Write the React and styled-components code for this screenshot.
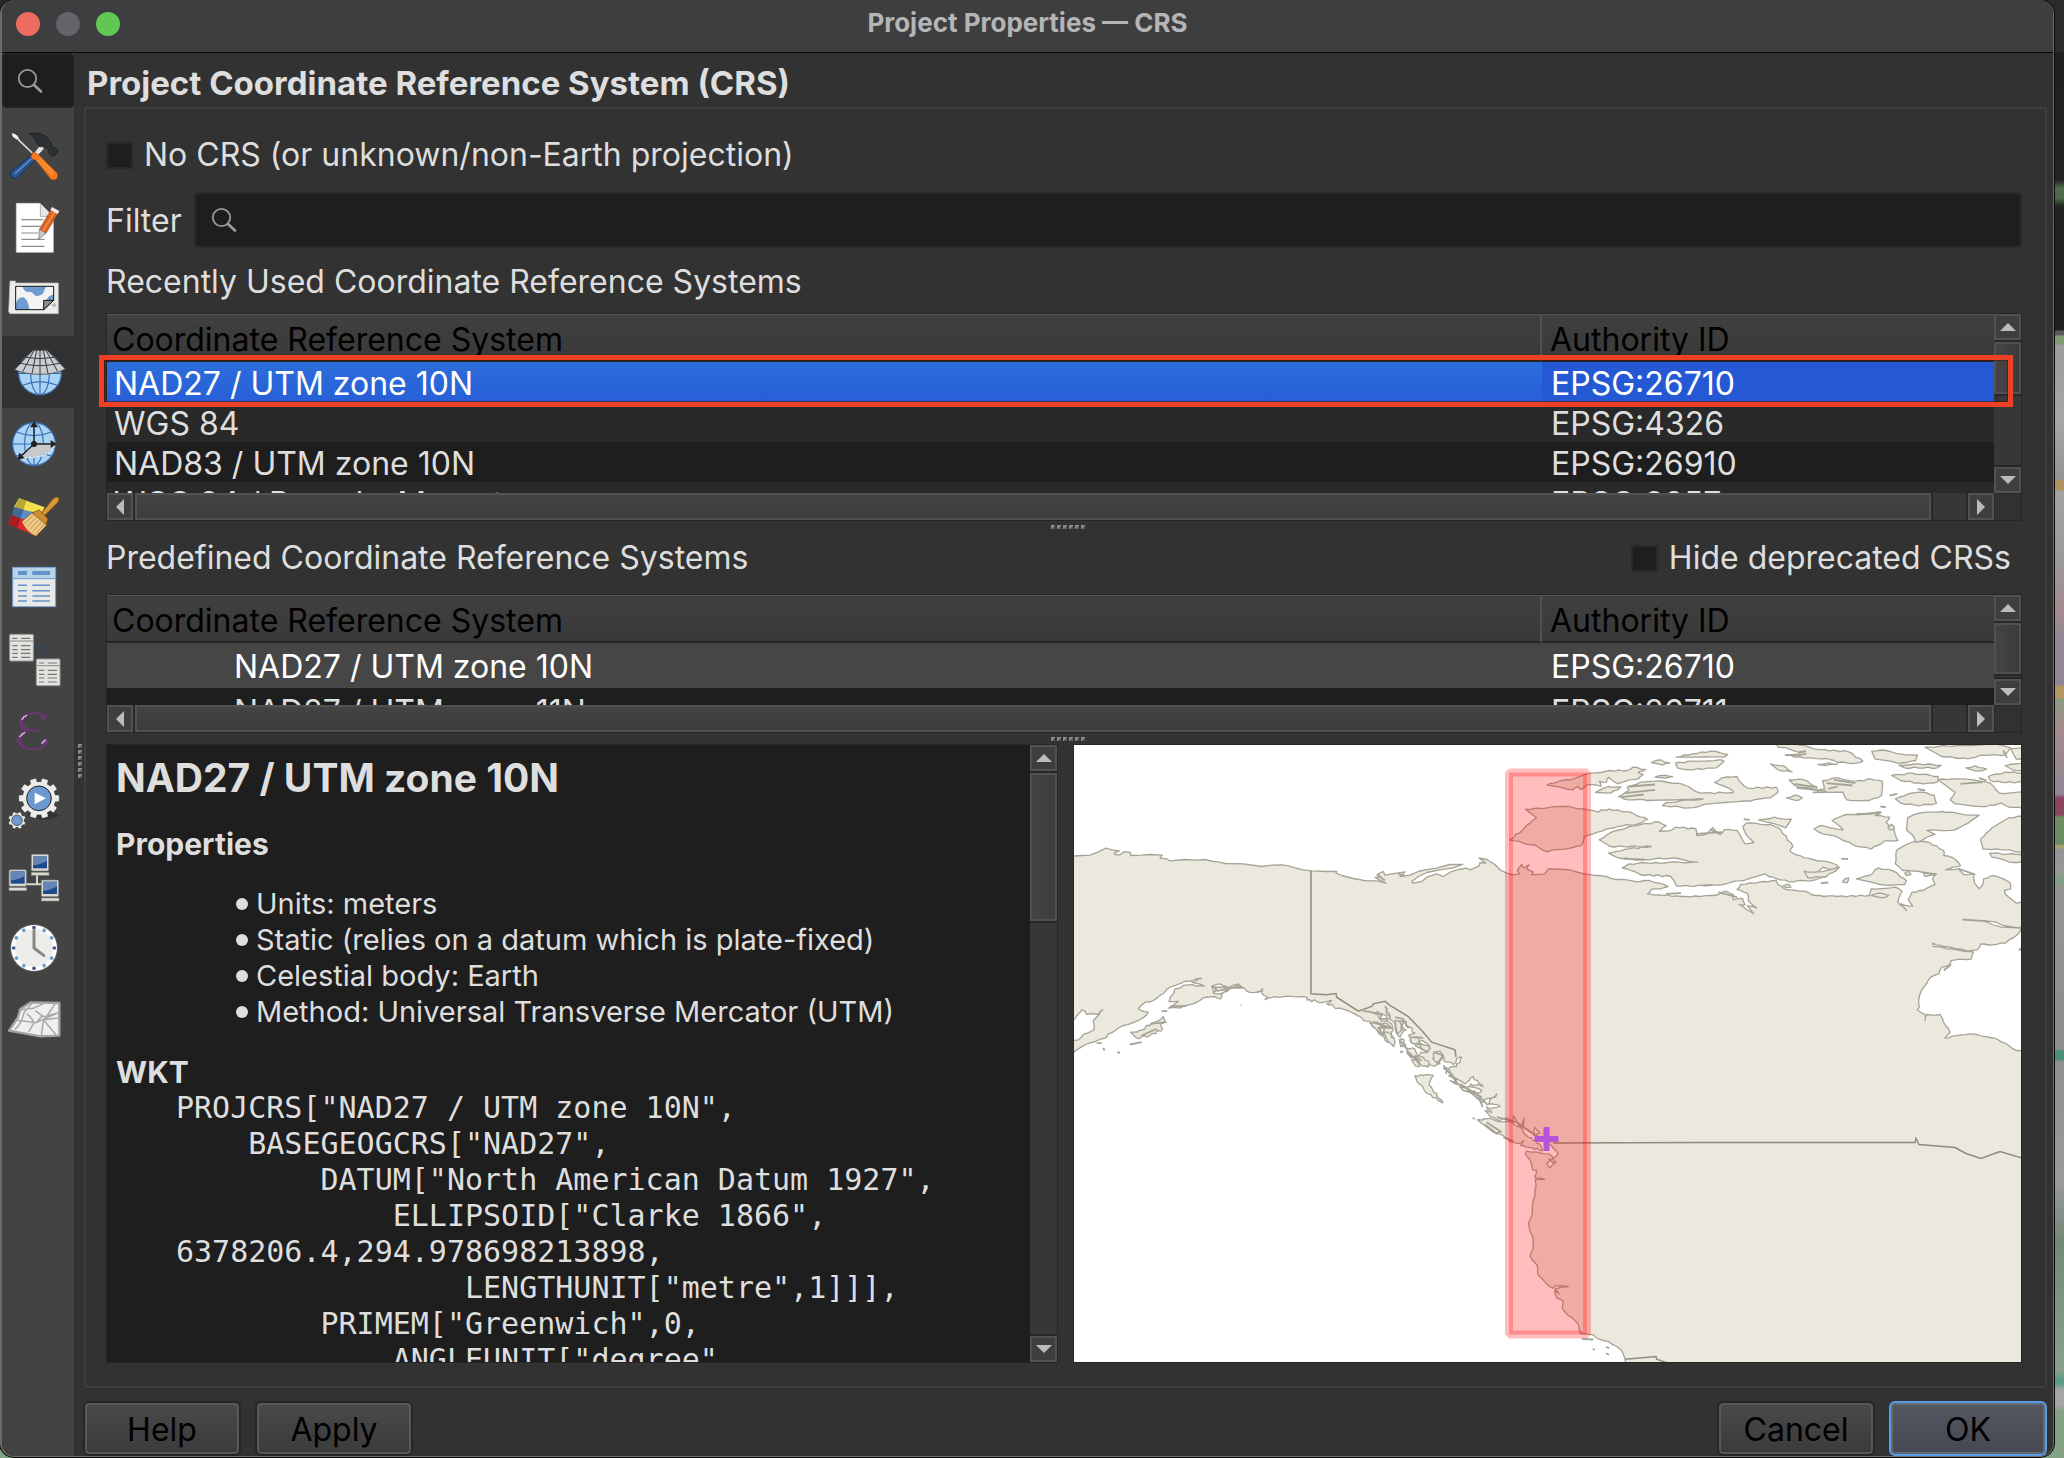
import React from "react";
import styled, { createGlobalStyle, css } from "styled-components";

const UI = `Inter, "Liberation Sans", sans-serif`;
const MONO = `"DejaVu Sans Mono", "Liberation Mono", monospace`;

const GlobalStyle = createGlobalStyle`
  *, *::before, *::after { box-sizing: border-box; }
  body { margin: 0; background: #1d1d1d; font-family: ${UI}; color: #dedede; }
  button, input { font: inherit; color: inherit; }
`;

/* ---------- window frame ---------- */

const Desktop = styled.div`
  display: flex;
  height: 100vh;
  min-height: 1100px;
  padding-right: 10px;
  padding-bottom: 1px;
  background: linear-gradient(
    #2a2a2a 0, #2a2a2a 52px, #1f1f1f 53px, #232323 180px, #4d6b4a 188px, #4d6b4a 198px, #222 206px,
    #1f1f1f 330px, #5a5a5a 331px, #5a5a5a 335px, #7f9c72 336px, #7f9c72 344px, #9c9c9c 345px, #a6a6a6 420px,
    #939393 480px, #b39261 481px, #b39261 490px, #a3a3a3 491px, #9a9a9a 560px, #a58a8d 610px, #8f8794 640px,
    #8f8794 685px, #b59560 686px, #b59560 697px, #8a9a80 700px, #a58a8d 730px, #8f8794 794px, #8c4560 798px,
    #8c4560 815px, #6c8d63 817px, #6c8d63 844px, #b0a666 846px, #939393 850px, #999 870px, #7fa183 880px,
    #949494 890px, #8d8d8d 1049px, #4a8f78 1051px, #4a8f78 1059px, #909090 1062px, #9a9a9a 1180px,
    #74887a 1240px, #8aa08a 1370px, #4f9a82 1382px, #a5a5a5 1390px, #a5a5a5 1405px, #84a384 1412px, #84a384 100%
  );
`;

const Window = styled.div`
  flex: 1;
  min-width: 0;
  display: flex;
  flex-direction: column;
  overflow: hidden;
  background: #323232;
  border: solid #6a6a6a;
  border-width: 0 1px 1px 2px;
  border-radius: 14px;
  box-shadow: 0 0 0 1px #080808;
`;

const TitleBar = styled.header`
  display: grid;
  grid-template-columns: 1fr auto 1fr;
  align-items: center;
  height: 53px;
  padding: 0 14px 4px;
  background: #3d3e40;
  border-bottom: 1px solid #050505;
`;

const Lights = styled.div`
  display: flex;
  gap: 16px;
`;

const Light = styled.button`
  width: 24px;
  height: 24px;
  padding: 0;
  border: 0;
  border-radius: 50%;
  background: ${(p) => p.$color};
`;

const WindowTitle = styled.h1`
  margin: 0;
  padding-bottom: 2px;
  font-size: 26px;
  line-height: 32px;
  font-weight: 700;
  color: #b5b5b6;
`;

const Body = styled.div`
  flex: 1;
  min-height: 0;
  display: flex;
`;

/* ---------- side bar ---------- */

const Sidebar = styled.nav`
  width: 72px;
  flex: none;
  background: #434343;
`;

const SideSearch = styled.label`
  display: flex;
  align-items: center;
  height: 55px;
  padding-left: 14px;
  margin-bottom: 12px;
  background: #1e1e1e;
  border: 1px solid #272727;
  border-radius: 4px;

  input {
    width: 20px;
    padding: 0;
    border: 0;
    outline: 0;
    background: none;
  }
`;

const SideItem = styled.button`
  display: block;
  width: 72px;
  height: 72px;
  padding: 0;
  border: 0;
  background: ${(p) => (p.$active ? "#323232" : "none")};

  svg { display: block; }
`;

/* ---------- main column ---------- */

const Main = styled.main`
  flex: 1;
  min-width: 0;
  display: flex;
  flex-direction: column;
  padding-right: 6px;
`;

const Grip = styled.div`
  flex: none;
  display: flex;
  flex-direction: ${(p) => (p.$vertical ? "column" : "row")};
  justify-content: center;
  align-items: center;
  gap: 2px;
  ${(p) => (p.$vertical ? "width: 9px; padding: 12px 0 0 2px;" : "height: 11px; padding-left: 8px;")}

  i {
    width: 4px;
    height: 4px;
    background: linear-gradient(135deg, #8b8b8b 60%, #5b5b5b 60%);
  }
`;

const PageTitle = styled.h2`
  margin: 0;
  padding-left: 4px;
  font-size: 33px;
  line-height: 60px;
  height: 54px;
  font-weight: 700;
  white-space: nowrap;
`;

const GroupBox = styled.section`
  flex: 1;
  min-height: 0;
  display: flex;
  flex-direction: column;
  margin-left: 1px;
  padding: 20px 23px 23px 20px;
  border: 2px solid #3f3f3f;
  border-radius: 3px;
`;

const CheckLabel = styled.label`
  display: flex;
  align-items: center;
  gap: 11px;
  padding-right: ${(p) => p.$inset || 0}px;
  height: 52px;
  font-size: 32px;
  line-height: 40px;
  white-space: nowrap;

  input {
    appearance: none;
    width: 27px;
    height: 27px;
    margin: 0;
    background: #1e1e1e;
    border: 2px solid #292929;
  }
`;

const FilterRow = styled.div`
  display: flex;
  align-items: center;
  gap: 12px;
  margin-top: 11px;
  font-size: 32px;
  line-height: 40px;

  label { padding-top: 2px; }
`;

const SearchField = styled.div`
  flex: 1;
  display: flex;
  align-items: center;
  gap: 10px;
  height: 56px;
  padding-left: 15px;
  background: #1e1e1e;
  border: 2px solid #292929;
  border-radius: 5px;

  input {
    flex: 1;
    min-width: 0;
    border: 0;
    outline: 0;
    background: none;
  }
`;

const SectionRow = styled.div`
  display: flex;
  align-items: center;
  justify-content: space-between;
  height: ${(p) => p.$height}px;
  margin-bottom: ${(p) => p.$after || 0}px;
  padding-top: 2px;
  font-size: 32px;
  line-height: 40px;
  white-space: nowrap;
`;

/* ---------- tables and scroll bars ---------- */

const ScrollFrame = styled.div`
  position: relative;
  flex: none;
  display: grid;
  grid-template: minmax(0, 1fr) 27px / minmax(0, 1fr) 27px;
  height: ${(p) => p.$height}px;
  border: 1px solid #262626;
`;

const Viewport = styled.div`
  overflow: hidden;
  background: #1e1e1e;
`;

const Corner = styled.div`
  background: #313131;
  border: solid #292929;
  border-width: 1px 0 0 1px;
`;

const Bar = styled.div`
  display: flex;
  flex-direction: ${(p) => (p.$vertical ? "column" : "row")};
  gap: 2px;
  min-height: 0;
  background: #282828;
`;

const BarButton = styled.button`
  flex: none;
  display: grid;
  place-items: center;
  width: ${(p) => (p.$vertical ? 27 : 26)}px;
  height: ${(p) => (p.$vertical ? 26 : 27)}px;
  padding: 0;
  border: 2px solid #515151;
  background: #3e3e3e;
`;

const Thumb = styled.div`
  flex: ${(p) => p.$flex};
  border: 2px solid #515151;
  background: ${(p) =>
    p.$vertical ? "linear-gradient(90deg, #444, #3c3c3c)" : "linear-gradient(#444, #3c3c3c)"};
`;

const Track = styled.div`
  flex: 1;
  background: #373737;
`;

const Arrow = styled.span`
  border: solid transparent;
  ${(p) =>
    ({
      up: css`border-width: 0 8px 8px; border-bottom-color: #bcbcbc;`,
      down: css`border-width: 8px 8px 0; border-top-color: #bcbcbc;`,
      left: css`border-width: 8px 8px 8px 0; border-right-color: #bcbcbc;`,
      right: css`border-width: 8px 0 8px 8px; border-left-color: #bcbcbc;`,
    })[p.$dir]}
`;

const Table = styled.table`
  width: 100%;
  table-layout: fixed;
  border-collapse: separate;
  border-spacing: 0;
  font-size: 32px;
  white-space: nowrap;

  th {
    height: 48px;
    padding: 4px 0 0 5px;
    text-align: left;
    font-weight: 400;
    line-height: 41px;
    color: #000;
    background: linear-gradient(#404040, #393939);
    border-top: 1px solid #565656;
    border-bottom: 2px solid #262626;
  }
  th:first-child { border-right: 2px solid #515151; }
  th:last-child { width: 452px; padding-left: 8px; }

  td {
    height: ${(p) => p.$row}px;
    padding: 3px 0 0 9px;
    line-height: ${(p) => p.$row - 3}px;
  }
  td:first-child { padding-left: ${(p) => p.$indent}px; }
`;

const ROW = {
  dark: css`background: #1e1e1e;`,
  light: css`background: #292929;`,
  current: css`background: #464646; color: #fff;`,
  selected: css`
    color: #fff;
    background: #2459d3;
    td:first-child { background: linear-gradient(#2d6ddb, #275fd7); }
  `,
};

const Row = styled.tr`
  ${(p) => ROW[p.$tone]}
`;

const Highlight = styled.div`
  position: absolute;
  left: -8px;
  right: 8px;
  top: 41px;
  height: 52px;
  border: 5px solid #ee4024;
  outline: 1px solid rgba(70, 20, 10, 0.6);
  outline-offset: -6px;
  pointer-events: none;
`;

/* ---------- details ---------- */

const Panes = styled.div`
  flex: 1;
  min-height: 0;
  display: grid;
  grid-template-columns: minmax(0, 952fr) minmax(0, 949fr);
  gap: 15px;
`;

const InfoPane = styled.div`
  display: grid;
  grid-template-columns: minmax(0, 1fr) 27px;
  min-height: 0;
  border: 1px solid #262626;
  background: #1e1e1e;
`;

const InfoText = styled.article`
  min-height: 0;
  overflow: hidden;
  padding: 6px 0 0 9px;
  font-size: 29px;
  line-height: 36px;

  h3 { margin: 0 0 21px; font-size: 39px; line-height: 54px; font-weight: 700; }
  h4 { margin: 0; font-size: 30px; line-height: 36px; font-weight: 700; }
  ul { margin: 24px 0; padding: 0 0 0 120px; list-style: none; }
  li { display: flex; align-items: center; gap: 8px; white-space: nowrap; }
  li::before { content: ""; width: 12px; height: 12px; border-radius: 50%; background: currentColor; }
  pre { margin: 0 0 0 60px; font-family: ${MONO}; font-size: 30px; line-height: 36px; }
`;

const MapFrame = styled.div`
  min-height: 0;
  border: 1px solid #262626;
  background: #fff;

  svg { display: block; width: 100%; height: 100%; }
`;

const Footer = styled.footer`
  flex: none;
  display: flex;
  gap: 14px;
  height: 68px;
  padding-top: 13px;
`;

const Spacer = styled.div`
  flex: 1;
`;

const PushButton = styled.button`
  width: 158px;
  height: 55px;
  padding: 2px 0 0;
  border: 2px solid ${(p) => (p.$primary ? "#589be6" : "#262626")};
  border-radius: 6px;
  background: ${(p) =>
    p.$primary ? "linear-gradient(#535861, #444850)" : "linear-gradient(#494949, #3b3b3b)"};
  box-shadow: inset 0 0 0 2px ${(p) => (p.$primary ? "#646a74" : "#585858")};
  font-size: 32px;
  line-height: 40px;
  color: #000;
`;

/* ---------- drawings ---------- */

const Magnifier = () => (
  <svg width="26" height="26" viewBox="0 0 26 26" fill="none" stroke="#9a9a9a" aria-hidden="true">
    <circle cx="10.5" cy="10.5" r="8.7" strokeWidth="1.8" />
    <path d="M17 17l7 6.500" strokeWidth="2.800" strokeLinecap="round" />
  </svg>
);

const Tools = () => (
  <>
    <path d="M37 403l14 6 6 12 40 38" fill="none" stroke="#e2e2e2" strokeWidth="5" />
    <path d="M35 400l10 2 10 12-4 5-12-8z" fill="#f2f2f2" />
    <path d="M98 463l12 13-56 56q-8 8-18 0-10-9-2-18z" fill="#2a5590" stroke="#152f56" strokeWidth="3" />
    <path d="M94 476l-50 46" stroke="#6b94c8" strokeWidth="4" />
    <path d="M122 434l10 12-20 22-9-10z" fill="#dfe3e0" stroke="#555" strokeWidth="1.500" />
    <path d="M88 402q30-8 50 8 18 14 18 32l12 3q8 6 4 14l-12 10-12-8-2-12-16-12-10 4-8-8q-4-22-24-31z" fill="#2b3032" stroke="#14181a" strokeWidth="2" />
    <path d="M92 470l8-14 16 8 56 56q4 12-4 18-8 4-16-1l-44-56-10-3z" fill="#f4791f" stroke="#a94a0c" strokeWidth="2" />
    <path d="M112 480l46 46M122 478l40 42" stroke="#ffae5c" strokeWidth="3" />
  </>
);

const Page = () => (
  <>
    <path d="M49 610h72l39 40v107H49z" fill="#fff" stroke="#d5d5d5" strokeWidth="2" />
    <path d="M121 610v39h39z" fill="#e6e6e6" stroke="#666" strokeWidth="1.500" />
    <path d="M64 659h66M64 679h58M64 699h50M64 718h70M64 739h70" stroke="#8f8f8f" strokeWidth="3.500" />
    <path d="M154 628l20 12-36 60-20-12z" fill="#dc6423" stroke="#8f3a0c" strokeWidth="1.500" />
    <path d="M164 636l-36 58" stroke="#f59b4e" strokeWidth="4" />
    <path d="M156 621l22 12-5 9-22-12z" fill="#f1ece8" />
    <path d="M118 688l20 12-22 17z" fill="#c9c9c9" stroke="#666" strokeWidth="2" />
  </>
);

const Layout = () => (
  <>
    <path d="M30 843h16v6h129v92H30l-4-6z" fill="#ececea" stroke="#bdbdbd" strokeWidth="2" />
    <path d="M47 859h114v42l-30 28H47z" fill="#f3f3f3" />
    <path d="M68 860h70q-6 10-8 20-12 12-26 6-8-14-22-10-12-4-14-16zM48 928v-18q6-20 22-18 14 6 18 36zM140 900q4-14 20-16v18z" fill="#6d9bd2" />
    <path d="M47 859h114v42l-30 28H47z" fill="none" stroke="#111" strokeWidth="3" />
    <path d="M131 901h30l-30 28z" fill="#8d8d8d" stroke="#111" strokeWidth="3" />
    <path d="M152 916l12-8 6 6-6 8z" fill="#bbb" />
  </>
);

const Globe = ({ cx, cy }) => (
  <g fill="none" stroke="#3b6fb8" strokeWidth="3.500">
    <circle cx={cx} cy={cy} r="64" fill="#a9d4f3" />
    <ellipse cx={cx} cy={cy} rx="28" ry="64" />
    <path d={`M${cx} ${cy - 64}v128M${cx - 64} ${cy}h128M${cx - 52} ${cy - 36}q52 22 104 0M${cx - 52} ${cy + 36}q52-22 104 0`} />
  </g>
);

const Projection = () => (
  <>
    <Globe cx={120} cy={160} />
    <path d="M99 91h42l55 56q-30 16-76 16t-76-14z" fill="#c9ced2" stroke="#4a4a4a" strokeWidth="2.500" />
    <path d="M78 112q42 8 84 0M62 130q58 14 116 0M110 91l-14 70M130 91l14 70M120 91v72M102 91l-34 64M138 91l34 62" fill="none" stroke="#3a3a3a" strokeWidth="3" />
  </>
);

const Transform = () => (
  <>
    <Globe cx={102} cy={372} />
    <path d="M102 372h62q-14 42-92 40l-10 0z" fill="#c7c9cc" />
    <path d="M62 412q88 6 102-36" fill="none" stroke="#fff" strokeWidth="3" strokeDasharray="7 5" />
    <path d="M102 372v-54M102 372h52M102 372l-36 34" stroke="#222" strokeWidth="4" />
    <path d="M102 304l-12 18h24zM170 372l-18-12v24zM52 420l6-22 16 16z" fill="#222" />
    <circle cx="102" cy="372" r="9" fill="#222" />
  </>
);

const Brush = () => (
  <>
    <path d="M57 534l77 28-14 26q-40-4-78-26z" fill="#f4e04a" />
    <path d="M44 560q40 16 76 18l-14 30q-38-6-70-24z" fill="#5b8bc8" />
    <path d="M34 586q30 12 66 20l12 44-88-38z" fill="#e3262b" />
    <path d="M57 534l22 8-26 82-29-12z" fill="#000" opacity=".25" />
    <path d="M124 580l34-42q10-10 18-6 4 8-4 17l-40 40z" fill="#d99838" stroke="#7d4c10" strokeWidth="2.500" />
    <path d="M98 578l20-8 26 26-6 18-14 2z" fill="#d08d34" stroke="#7d4c10" strokeWidth="2.500" />
    <path d="M96 578l44 38-32 33q-28-12-43-44z" fill="#edc987" stroke="#7d4c10" strokeWidth="2" />
    <path d="M100 586l-26 24M108 593l-26 26M116 600l-26 28M124 607l-26 29M132 613l-26 30" stroke="#a9752c" strokeWidth="2" />
  </>
);

const Attributes = () => (
  <>
    <path d="M38 742h129v118H38z" fill="#e9e9e7" stroke="#6e9bd0" strokeWidth="3" />
    <path d="M40 744h125v32H40z" fill="#b5d4e9" />
    <path d="M38 776h129" stroke="#6e9bd0" strokeWidth="3" />
    <path d="M54 759h27M97 759h53" stroke="#6592c8" strokeWidth="12" />
    <path d="M54 796h27M54 812h27M54 828h27M54 843h27M97 796h53M97 812h53M97 828h53M97 843h53" stroke="#6592c8" strokeWidth="4.500" />
  </>
);

const Sheet = ({ x, y }) => (
  <g transform={`translate(${x} ${y})`}>
    <rect width="71" height="80" rx="3" fill="#e3e3df" stroke="#9a9a96" strokeWidth="3" />
    <path d="M1 20h69" stroke="#888" strokeWidth="3" />
    <path d="M8 12h16M34 12h28M8 34h16M34 34h28M8 46h16M34 46h28M8 57h16M34 57h28M8 69h16M34 69h28" stroke="#777" strokeWidth="3.500" />
  </g>
);

const Relations = () => (
  <>
    <path d="M100 978h26v40" fill="none" stroke="#2c4462" strokeWidth="4" />
    <Sheet x={29} y={943} />
    <Sheet x={109} y={1017} />
  </>
);

const Variables = () => (
  <>
    <path d="M136 84q-8-14-32-14-32 0-38 22 0 20 24 28-30 6-32 30 2 26 42 28 34 0 42-26M92 121q14 3 28 0" fill="none" stroke="#693872" strokeWidth="6" strokeLinecap="round" />
    <path d="M72 76q-16 20 0 42-22-22 0-42zM66 128q-18 22 4 44-30-18-4-44z" fill="#693872" stroke="#693872" strokeWidth="7" strokeLinejoin="round" />
    <path d="M122 72q20-2 16 16-8 8-16 0zM122 168q-2-16 14-22 12 4 6 16z" fill="#693872" />
    <path d="M66 88q4-8 14-12M60 140q4-6 14-12M126 160l10-10" fill="none" stroke="#d9bfdf" strokeWidth="4" strokeLinecap="round" />
  </>
);

const Cog = ({ cx, cy, r, teeth, width }) => (
  <g fill="#ececea" stroke="#1d1d1d" strokeWidth="1">
    {Array.from({ length: teeth }, (_, i) => (
      <rect key={i} x={cx - width / 2} y={cy - r * 1.24} width={width} height={r} rx={width / 6} transform={`rotate(${(360 / teeth) * (i + 0.5)} ${cx} ${cy})`} />
    ))}
    <circle cx={cx} cy={cy} r={r} stroke="none" />
  </g>
);

const Processing = () => (
  <>
    <ellipse cx="130" cy="376" rx="46" ry="12" fill="#333" />
    <Cog cx={117} cy={325} r={49} teeth={10} width={20} />
    <circle cx="117" cy="325" r="37" fill="#6c9ad0" stroke="#222" strokeWidth="3" />
    <path d="M104 308l34 17-34 18z" fill="#fff" />
    <Cog cx={51} cy={391} r={21} teeth={8} width={10} />
    <circle cx="51" cy="391" r="16" fill="#6c9ad0" stroke="#333" strokeWidth="2" />
  </>
);

const Computer = ({ x, y }) => (
  <g transform={`translate(${x} ${y})`}>
    <rect width="52" height="50" rx="4" fill="#dcdcd4" stroke="#777" strokeWidth="2" />
    <rect x="5" y="5" width="42" height="37" fill="#1d4a8c" />
    <path d="M5 5h42v14q-14 10-42 14z" fill="#6684b4" />
    <rect x="0" y="54" width="53" height="9" fill="#d9dbd0" stroke="#888" strokeWidth="1.500" />
  </g>
);

const Server = () => (
  <>
    <path d="M111 552v32M78 583h48" stroke="#d5d5d5" strokeWidth="6" />
    <Computer x={94} y={493} />
    <Computer x={27} y={539} />
    <Computer x={124} y={570} />
  </>
);

const Clock = () => (
  <>
    <circle cx="102" cy="774" r="72" fill="#5c5c5a" />
    <circle cx="102" cy="774" r="69" fill="#fff" />
    <circle cx="102" cy="774" r="58" fill="#ededeb" />
    {Array.from({ length: 12 }, (_, i) => (
      <circle key={i} cx="102" cy="713" r="5.500" fill={i % 3 ? "#6c9ad0" : "#3b5a86"} transform={`rotate(${i * 30} 102 774)`} />
    ))}
    <path d="M102 722v52l30 23" fill="none" stroke="#878783" strokeWidth="9" strokeLinejoin="round" strokeLinecap="round" />
  </>
);

const Terrain = () => (
  <g strokeLinejoin="round" fill="none">
    <path d="M92 937l86 2v98l-58 2-93-17 26-38 8-27z" fill="#efefed" stroke="#a2a2a2" strokeWidth="7" />
    <path d="M56 960l44-5 32-15M46 990l62 8 68-30M44 1018q20-14 28-50l24-28M86 1026l16-28q-10-20-22-26M124 1036l6-42 36-54M106 962l24 18 46-12M108 998l18-20M134 994l34 40M128 990l46-6" stroke="#a8a8a8" strokeWidth="4.500" />
  </g>
);

const SIDE_ITEMS = [
  ["General", Tools, 360],
  ["Metadata", Page, 576],
  ["View Settings", Layout, 792],
  ["CRS", Projection, 48],
  ["Transformations", Transform, 264],
  ["Default Styles", Brush, 480],
  ["Data Sources", Attributes, 696],
  ["Relations", Relations, 912],
  ["Variables", Variables, 18],
  ["Macros", Processing, 234],
  ["Server", Server, 450],
  ["Temporal", Clock, 666],
  ["Terrain", Terrain, 882],
];

/* The map outline is digitised on three sheets, each with its own origin and scale. */
const sheet = (ox, oy, sx, sy) => (points) =>
  points
    .trim()
    .split(/\s+/)
    .map((pair) => {
      const [x, y] = pair.split(",").map(Number);
      return `${(ox + x * sx).toFixed(1)},${(oy + y * sy).toFixed(1)}`;
    })
    .join(" ");

const west = sheet(1070, 740, 1 / 3, 1 / 3);
const east = sheet(1480, 740, 584 / 1568, 1 / 3);
const coast = sheet(1300, 940, 1 / 3, 1 / 3);

/* Adds small bays and points to a shore line, the same ones on every render. */
const rugged = (text, depth, step = 5) => {
  const points = text.split(" ").map((pair) => pair.split(",").map(Number));
  const out = [];
  points.forEach(([x, y], i) => {
    out.push(`${x},${y}`);
    const next = points[i + 1];
    if (!next) return;
    const length = Math.hypot(next[0] - x, next[1] - y);
    const count = Math.floor(length / step);
    for (let k = 1; k <= count; k += 1) {
      const t = k / (count + 1);
      const px = x + (next[0] - x) * t;
      const py = y + (next[1] - y) * t;
      const shift = Math.sin(px * 12.9 + py * 78.2) * depth;
      out.push(`${(px - ((next[1] - y) / length) * shift).toFixed(1)},${(py + ((next[0] - x) / length) * shift).toFixed(1)}`);
    }
  });
  return out.join(" ");
};

const MAINLAND = [
  west(`0,347 60,344 85,334 108,323 125,328 148,331 132,338 135,342 150,343 162,334 180,335 183,345 215,344 240,342
    277,344 270,353 290,355 300,361 345,357 380,359 405,357 430,363 445,364 465,369 520,370 575,378 605,374 635,373 655,376 675,382
    700,388 723,391 770,393 800,393 798,398 815,405 850,414 890,421 920,421 948,428 928,418 915,411 930,410 925,400 940,393 945,404
    985,397 1005,394 990,408 1020,404 1045,393 1065,388 1100,383 1140,372 1178,372 1150,382 1110,388 1070,396 1045,408
    1025,424 1030,428 1055,423 1070,410 1100,400 1120,408 1140,395 1165,387 1192,383 1200,388 1228,376 1230,366 1248,368 1226,352 1250,357
    1275,372 1290,388 1310,398 1330,403 1350,400 1342,390 1355,372 1362,382 1377,373 1370,385 1390,395 1385,403 1425,400 1435,385 1485,387`),
  rugged(east(`242,388 280,400 330,406 370,417 430,423 455,420 480,428 505,438 485,445 460,446 450,460 480,463 540,468 590,468 640,462
    660,452 680,462 680,478 705,474 712,492 695,492 735,520 718,496 743,502 720,480 718,458 690,447 700,432 750,425 795,420 800,432
    825,448 870,452 900,465 960,468 1045,465 1050,445 1115,440 1133,452 1122,485 1145,510 1130,490 1162,497 1150,478 1160,455 1190,450
    1222,432 1215,415 1225,400 1195,408 1190,396 1160,392 1135,390 1115,370 1118,330 1145,312 1165,303 1205,305 1245,330 1245,345 1270,352
    1290,375 1250,388 1285,385 1300,403 1325,400 1328,428 1340,445 1350,432 1352,415 1380,405 1422,425 1425,445 1408,450 1410,460 1440,488 1470,480
    1470,560 1452,568 1440,585 1410,608 1375,613 1345,610 1335,628 1310,632 1270,622 1245,618 1215,608 1218,618 1255,625 1325,634
    1320,655 1265,660 1262,672 1240,680 1232,700 1210,710 1200,728 1185,750 1178,778 1180,800 1174,808 1195,822 1195,840 1200,822 1235,822
    1250,855 1262,875 1248,893 1268,887 1315,880 1350,888 1390,897 1420,915 1440,930 1470,936 1470,1900`), 0.6),
  rugged(coast(`976,1290 976,1258 965,1230 950,1218 925,1203 895,1195 880,1183 842,1180 836,1155 825,1140 805,1125 787,1103 790,1082 770,1072
    764,1050 778,1060 766,1045 805,1038 765,1036 760,1043 745,1035 715,1005 712,975 690,948 700,925 700,900 690,870 686,845 697,820
    701,775 708,740 706,717 735,717 704,710 710,690 698,688 690,658 676,640 680,632 745,640 760,652 740,668 750,682 768,665 757,655
    775,640 752,612 735,608 725,592 700,584 720,578 705,560 702,580 670,560 672,533 665,560 650,545 640,525 640,545 620,532 600,540 570,528 555,510`), 0.5),
  rugged(coast(`575,516 560,500 600,497 560,493 590,460 550,485 530,465 545,450 500,440 512,430 550,437 525,418 520,408 495,430 460,408 445,385 470,378 485,350
    470,355 460,372 440,365 415,335 398,355 420,370 380,378 350,345 385,330 330,300 390,325 375,305 340,300 325,285 345,278 310,240 325,262 300,240
    318,268 300,290 275,240 255,198 270,235 230,213 240,235 275,250 280,318 245,285 215,250 185,232 150,213 115,203 80,190 95,180 50,183 20,178`), 1.4, 3),
  rugged(west(`712,778 710,770 655,767 600,772 585,778 592,768 575,758 578,745 560,755 530,752 505,730 480,740 450,730 425,738 430,758 455,760
    452,775 435,768 400,772 370,790 330,803 295,803 325,783 297,783 315,745 355,733 403,737 365,725 395,714 345,722 300,740
    270,765 250,780 225,785 205,805 235,815 230,823 200,842 160,855 115,880 105,893 60,907 12,935 0,940 0,898 25,898 42,880 72,868
    70,840 85,825 98,808 85,822 50,822 45,812 35,808 25,820 15,835 0,835`), 0.8),
].join(" ");

const ARCTIC = [
  "180,134 210,123 250,115 300,98 350,90 395,90 410,80 445,87 425,95 438,102 425,115 400,118 370,130 345,110 340,125 320,122 325,138 290,132 272,148 262,138 250,148 215,140",
  "122,206 180,202 240,198 290,208 318,215 325,208 370,208 410,218 450,237 425,250 370,258 315,275 280,290 272,315 180,334 150,315 115,307 80,298 115,268 125,255 152,232",
  "320,298 360,272 410,256 480,244 500,255 482,273 505,272 525,260 580,265 582,285 610,280 625,262 645,282 655,268 690,270 712,310 735,306 720,290 706,258 715,248 780,252 808,268 840,318 832,332 870,352 925,362 960,375 955,392 920,380 900,398 930,408 900,418 830,424 775,408 765,400 720,415 660,430 600,435 528,437 512,408 430,402 382,382 400,370 470,366 560,366 585,365 520,352 430,358 380,354 345,338 400,325 460,318 350,318",
  "450,180 385,175 372,168 400,150 395,140 430,125 470,122 530,128 560,138 592,158 680,156 678,150 630,126 650,112 690,108 708,135 720,143 795,140 800,155 780,172 725,182 620,190 560,202 490,195 500,186 600,175 500,178",
  "527,50 570,40 620,32 665,42 655,50 590,50",
  "525,68 570,62 640,58 655,62 635,82 560,88 530,82",
  "460,66 485,58 510,68 490,73",
  "310,156 345,138 378,140 350,158",
  "470,110 490,105 517,108 500,113",
  "795,8 860,14 900,26 990,34 1028,62 1010,68 960,66 930,54 870,52 820,44 875,40 830,25 800,20",
  "780,70 815,76 838,95 800,88",
  "908,72 935,67 960,71 930,75",
  "1052,32 1090,30 1130,40 1175,44 1170,60 1120,68 1060,55",
  "1125,74 1180,70 1238,74 1228,82 1140,82",
  "1195,20 1280,15 1380,10 1425,22 1405,45 1350,44 1310,55 1240,48",
  "1425,25 1455,22 1470,56 1440,56",
  "1305,82 1330,76 1360,86 1330,91",
  "1410,76 1470,66 1470,90 1430,88",
  "1105,105 1160,98 1230,108 1228,125 1190,130 1130,120",
  "1365,108 1410,95 1470,98 1470,126 1400,125 1370,120",
  "1230,118 1280,115 1345,122 1370,128 1395,158 1470,156 1470,202 1420,200 1400,188 1360,198 1275,190 1262,178 1275,155",
  "830,118 870,118 905,140 900,148 845,135",
  "895,156 925,145 920,120 960,112 1010,122 1050,116 1080,122 1078,165 1045,180 985,178 975,155",
  "823,172 845,164 866,172 848,180",
  "1115,175 1150,160 1185,155 1220,165 1226,188 1180,196 1130,188",
  "897,265 920,255 975,268 945,240 985,222 1040,220 1075,215 1060,225 1100,230 1090,245 1112,270 1122,300 1085,302 1050,326 1000,312 960,290 910,275",
  "1148,232 1180,218 1240,213 1290,220 1340,224 1310,248 1275,268 1200,270 1222,282 1170,305 1160,282 1145,268",
  "748,238 790,230 836,236 820,262 770,245",
  "1470,226 1420,232 1375,262 1345,295 1350,325 1410,328 1470,338",
  "1368,338 1450,342 1470,366 1420,364 1375,350",
  "1010,415 1045,405 1070,382 1110,392 1145,420 1140,432 1100,435 1050,425",
  "1050,465 1070,458 1098,464 1080,472",
  "870,392 900,395 940,388 965,380 930,408 880,412",
  "815,435 830,432 835,440 820,441",
  "980,415 990,412 985,427 973,424",
  "1140,398 1150,392 1157,402 1145,405",
  "1095,260 1105,252 1113,265 1100,268",
];

const PACIFIC = [
  "345,405 370,405 400,405 388,435 428,487 385,460 352,425",
  "532,538 560,535 640,548 660,560 680,585 718,610 728,630 662,615 672,600 660,608 635,605 605,583 580,575",
  "210,248 232,245 252,262 250,280 232,270",
  "240,248 262,250 272,262 250,258",
  "252,275 268,278 284,300 282,318 262,300",
  "285,240 300,245 304,270 292,282",
  "298,298 312,298 316,320 302,318",
  "320,322 345,326 352,348 335,352 322,340",
  "345,345 370,350 388,370 385,380 362,372",
  "330,292 352,290 358,305 335,308",
  "360,312 388,318 384,332 364,326",
  "400,340 420,332 430,350 418,368 402,358",
  "335,358 352,362 360,378 346,376",
];

const GULF = [
  "182,875 215,868 245,848 280,828 285,840 272,850 278,865 240,885 200,893",
];

const ISLANDS = [
  ...ARCTIC.map((shape) => rugged(east(shape), 0.7)),
  ...PACIFIC.map((shape) => rugged(coast(shape), 0.9, 3)),
  ...GULF.map((shape) => rugged(west(shape), 1.2, 3)),
];

const INLETS = [
  east("1350,540 1385,545 1405,555 1445,562 1400,560 1375,552"),
  east("1445,562 1470,550 1470,568"),
];

/* Broken strokes carry "M" marks, so each leg is projected by itself. */
const legs = (project, text) =>
  text.split("M").map((leg) => "M" + project(leg)).join("");

const STROKES = [
  legs(east, "390,158 470,148M400,138 470,132M380,170 440,162M845,130 900,140M850,142 930,152M930,128 1000,135M950,118 1008,128M935,145 960,138M580,280 650,275M620,268 645,280M1010,222 1078,216M1120,160 1100,165M1175,146 1195,150M1290,130 1350,125M1340,112 1360,120M1405,30 1415,52M500,460 540,458M600,435 625,434M640,455 690,470M970,355 988,355M915,428 935,426M1295,537 1355,542M1245,690 1265,672M1285,385 1330,402M1190,396 1225,402M855,36 875,32M820,44 862,42M1447,630 1456,620M708,236 724,238M1075,198 1090,200M385,355 440,357"),
  legs(coast, "190,212 212,214 232,222M210,215 245,220 240,235 265,235M215,245 275,262 235,262 250,285M285,230 310,235 305,270M300,300 320,325M320,330 360,370M330,345 365,360M345,315 385,335M340,290 370,292M400,335 430,345 410,370M430,375 450,400 490,450 530,460M450,420 500,445M480,430 545,470M520,450 560,490M445,405 470,415 462,428 490,436M500,448 520,462 540,480 548,500M560,545 605,575M555,552 590,580 600,572M590,530 650,545 700,580M655,550 715,590M745,655 765,670M300,335 310,333M322,335 334,352M518,533 524,535M430,385 440,382 438,400M610,590 640,602M845,1195 880,1197M918,1220 928,1223M918,1238 927,1243M878,1226 884,1227"),
  legs(west, "430,740 520,742M440,752 505,738M450,762 480,745M425,735 440,748 432,755M460,735 475,745 470,755M495,732 515,738M920,402 945,420M985,400 1005,406M215,885 260,865M240,850 290,845M180,912 215,905M275,812 292,812M80,908 95,908M142,936 150,936M100,922 104,930M512,794 515,794M300,798 350,796M560,756 578,750"),
].join("");

const BORDERS = [
  west("723,391 723,760 770,763 798,759 800,770 865,812 905,798 910,790 945,782 960,795 1015,828 1060,875 1085,905 1155,928 1158,950"),
  "1553,1142.500 1700,1142 1915,1142 1916,1138 1919,1144 1955,1147 1966,1153 1981,1158 2000,1151 2030,1160",
  coast("976,1256 1068,1248 1070,1256 1110,1270"),
];

const AreaMap = () => (
  <svg viewBox="1074 744 947 618" preserveAspectRatio="xMidYMid slice" role="img" aria-label="Area of use">
    <rect x="1000" y="700" width="1100" height="720" fill="#fff" />
    <g fill="#ebe9de" stroke="#a5a396" strokeWidth="1.300" strokeLinejoin="round">
      <polygon points={MAINLAND} />
      {ISLANDS.map((points) => <polygon key={points} points={points} />)}
      {INLETS.map((points) => <polygon key={points} points={points} fill="#fff" />)}
      <path d={STROKES} fill="none" strokeWidth="1.800" />
    </g>
    {BORDERS.map((points) => (
      <polyline key={points} points={points} fill="none" stroke="#8d8c7e" strokeWidth="1.500" />
    ))}
    <rect x="1509" y="772" width="78" height="562" fill="#f00" fillOpacity=".26" stroke="#f00" strokeOpacity=".26" strokeWidth="8" strokeLinejoin="bevel" />
    <path d="M1546.500 1126.500v24M1534.500 1138.500h24" stroke="#b653d6" strokeWidth="6" />
  </svg>
);

/* ---------- composed parts ---------- */

const Dots = ({ vertical }) => (
  <Grip $vertical={vertical}>
    {Array.from({ length: 6 }, (_, i) => <i key={i} />)}
  </Grip>
);

const ScrollBar = ({ vertical, thumb }) => (
  <Bar $vertical={vertical}>
    <BarButton $vertical={vertical} aria-label={vertical ? "Scroll up" : "Scroll left"}>
      <Arrow $dir={vertical ? "up" : "left"} />
    </BarButton>
    <Thumb $vertical={vertical} $flex={thumb} />
    <Track />
    <BarButton $vertical={vertical} aria-label={vertical ? "Scroll down" : "Scroll right"}>
      <Arrow $dir={vertical ? "down" : "right"} />
    </BarButton>
  </Bar>
);

const CrsTable = ({ height, row, indent, rows, thumb, label, children }) => (
  <ScrollFrame $height={height}>
    <Viewport>
      <Table $row={row} $indent={indent} aria-label={label}>
        <thead>
          <tr>
            <th scope="col">Coordinate Reference System</th>
            <th scope="col">Authority ID</th>
          </tr>
        </thead>
        <tbody>
          {rows.map(([name, id, tone]) => (
            <Row key={id} $tone={tone}>
              <td>{name}</td>
              <td>{id}</td>
            </Row>
          ))}
        </tbody>
      </Table>
    </Viewport>
    <ScrollBar vertical thumb={thumb} />
    <ScrollBar thumb="54 1 0" />
    <Corner />
    {children}
  </ScrollFrame>
);

const RECENT = [
  ["NAD27 / UTM zone 10N", "EPSG:26710", "selected"],
  ["WGS 84", "EPSG:4326", "light"],
  ["NAD83 / UTM zone 10N", "EPSG:26910", "dark"],
  ["WGS 84 / Pseudo-Mercator", "EPSG:3857", "light"],
];

const PREDEFINED = [
  ["NAD27 / UTM zone 10N", "EPSG:26710", "current"],
  ["NAD27 / UTM zone 11N", "EPSG:26711", "dark"],
];

const WKT = `PROJCRS["NAD27 / UTM zone 10N",
    BASEGEOGCRS["NAD27",
        DATUM["North American Datum 1927",
            ELLIPSOID["Clarke 1866",
6378206.4,294.978698213898,
                LENGTHUNIT["metre",1]]],
        PRIMEM["Greenwich",0,
            ANGLEUNIT["degree"`;

export default function App() {
  return (
    <Desktop>
      <GlobalStyle />
      <Window>
        <TitleBar>
          <Lights>
            <Light $color="#ed6b60" aria-label="Close" />
            <Light $color="#636467" aria-label="Minimize" />
            <Light $color="#62c655" aria-label="Zoom" />
          </Lights>
          <WindowTitle>Project Properties — CRS</WindowTitle>
        </TitleBar>
        <Body>
          <Sidebar>
            <SideSearch>
              <Magnifier />
              <input type="text" aria-label="Search settings" />
            </SideSearch>
            {SIDE_ITEMS.map(([name, Drawing, top]) => (
              <SideItem key={name} $active={name === "CRS"} aria-label={name}>
                <svg width="72" height="72" viewBox={`6 ${top} 216 216`} aria-hidden="true">
                  <Drawing />
                </svg>
              </SideItem>
            ))}
          </Sidebar>
          <Dots vertical />
          <Main>
            <PageTitle>Project Coordinate Reference System (CRS)</PageTitle>
            <GroupBox>
              <CheckLabel>
                <input type="checkbox" />
                No CRS (or unknown/non-Earth projection)
              </CheckLabel>
              <FilterRow>
                <label htmlFor="filter">Filter</label>
                <SearchField>
                  <Magnifier />
                  <input id="filter" type="text" />
                </SearchField>
              </FilterRow>
              <SectionRow $height={65}>Recently Used Coordinate Reference Systems</SectionRow>
              <CrsTable height={208} row={40} indent={7} rows={RECENT} thumb="0 0 52px" label="Recently used">
                <Highlight />
              </CrsTable>
              <Dots />
              <SectionRow $height={50} $after={12}>
                Predefined Coordinate Reference Systems
                <CheckLabel $inset={11}>
                  <input type="checkbox" />
                  Hide deprecated CRSs
                </CheckLabel>
              </SectionRow>
              <CrsTable height={139} row={45} indent={127} rows={PREDEFINED} thumb="1 0 50px" label="Predefined" />
              <Dots />
              <Panes>
                <InfoPane>
                  <InfoText>
                    <h3>NAD27 / UTM zone 10N</h3>
                    <h4>Properties</h4>
                    <ul>
                      <li>Units: meters</li>
                      <li>Static (relies on a datum which is plate-fixed)</li>
                      <li>Celestial body: Earth</li>
                      <li>Method: Universal Transverse Mercator (UTM)</li>
                    </ul>
                    <h4>WKT</h4>
                    <pre>{WKT}</pre>
                  </InfoText>
                  <ScrollBar vertical thumb="0 0 148px" />
                </InfoPane>
                <MapFrame>
                  <AreaMap />
                </MapFrame>
              </Panes>
            </GroupBox>
            <Footer>
              <PushButton>Help</PushButton>
              <PushButton>Apply</PushButton>
              <Spacer />
              <PushButton>Cancel</PushButton>
              <PushButton $primary>OK</PushButton>
            </Footer>
          </Main>
        </Body>
      </Window>
    </Desktop>
  );
}
